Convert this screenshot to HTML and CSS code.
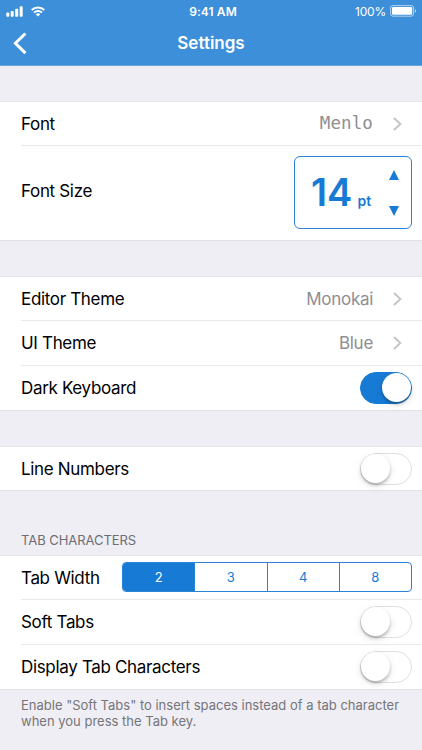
FILE: index.html
```html
<!DOCTYPE html>
<html lang="en">
<head>
  <meta charset="UTF-8">
  <meta name="viewport" content="width=device-width, initial-scale=1.0">
  <title>Settings</title>
  <link rel="stylesheet" href="styles.css">
</head>
<body>
  <header class="header">
    <div class="status-bar">
      <div class="status-left">
        <svg class="signal" width="17" height="11" viewBox="0 0 17 11" fill="#fff">
          <rect x="0.3" y="6.6" width="3" height="4.2" rx="0.8"/>
          <rect x="4.7" y="5" width="3" height="5.8" rx="0.8"/>
          <rect x="9.2" y="2.8" width="3" height="8" rx="0.8"/>
          <rect x="13.7" y="0.3" width="3" height="10.5" rx="0.8"/>
        </svg>
        <svg class="wifi" width="14" height="11" viewBox="0 0 14 11" fill="none" stroke="#fff" stroke-width="1.9">
          <path d="M0.7 4A9 9 0 0 1 13.3 4"/>
          <path d="M3 6.6A5.8 5.8 0 0 1 11 6.6"/>
          <path d="M7 10.6L4.8 8.4A3.1 3.1 0 0 1 9.2 8.4Z" fill="#fff" stroke="none"/>
        </svg>
      </div>
      <div class="status-time">9:41 AM</div>
      <div class="status-right">
        <span class="percent">100%</span>
        <svg width="27" height="12" viewBox="0 0 27 12">
          <rect x="0.6" y="0.6" width="23" height="10.6" rx="2.4" fill="none" stroke="#fff" stroke-opacity="0.6"/>
          <rect x="2" y="2" width="20.2" height="7.8" rx="1.2" fill="#fff"/>
          <path d="M24.9 4V7.8Q26.2 7.2 26.2 5.9T24.9 4Z" fill="#fff" fill-opacity="0.6"/>
        </svg>
      </div>
    </div>
    <nav class="nav-bar">
      <svg class="back" width="14" height="23" viewBox="0 0 14 23" fill="none" stroke="#fff" stroke-width="3">
        <path d="M12.4 1.5L2.4 11.3L12.4 21.1"/>
      </svg>
      <h1>Settings</h1>
    </nav>
  </header>

  <main>
    <section class="group">
      <div class="row first">
        <span class="label">Font</span>
        <span class="value mono">Menlo</span>
        <svg class="chevron" width="9" height="14" viewBox="0 0 9 14"><path d="M1 1L7.4 7L1 13"/></svg>
      </div>
      <div class="row tall">
        <span class="label">Font Size</span>
        <div class="stepper">
          <div class="size"><span class="number">14</span><span class="unit">pt</span></div>
          <div class="arrows">
            <svg width="10" height="10" viewBox="0 0 10 10"><path d="M5 0L10 10H0Z"/></svg>
            <svg width="10" height="10" viewBox="0 0 10 10"><path d="M5 10L10 0H0Z"/></svg>
          </div>
        </div>
      </div>
    </section>

    <section class="group">
      <div class="row first">
        <span class="label">Editor Theme</span>
        <span class="value">Monokai</span>
        <svg class="chevron" width="9" height="14" viewBox="0 0 9 14"><path d="M1 1L7.4 7L1 13"/></svg>
      </div>
      <div class="row">
        <span class="label">UI Theme</span>
        <span class="value">Blue</span>
        <svg class="chevron" width="9" height="14" viewBox="0 0 9 14"><path d="M1 1L7.4 7L1 13"/></svg>
      </div>
      <div class="row">
        <span class="label">Dark Keyboard</span>
        <div class="switch on"><div class="knob"></div></div>
      </div>
    </section>

    <section class="group">
      <div class="row single">
        <span class="label">Line Numbers</span>
        <div class="switch"><div class="knob"></div></div>
      </div>
    </section>

    <h2 class="group-title">TAB CHARACTERS</h2>
    <section class="group tabs">
      <div class="row first">
        <span class="label">Tab Width</span>
        <div class="segments">
          <div class="segment selected">2</div>
          <div class="segment">3</div>
          <div class="segment">4</div>
          <div class="segment">8</div>
        </div>
      </div>
      <div class="row">
        <span class="label">Soft Tabs</span>
        <div class="switch"><div class="knob"></div></div>
      </div>
      <div class="row">
        <span class="label">Display Tab Characters</span>
        <div class="switch"><div class="knob"></div></div>
      </div>
    </section>
    <p class="note">Enable "Soft Tabs" to insert spaces instead of a tab character<br>when you press the Tab key.</p>
  </main>
</body>
</html>
```
FILE: styles.css
```css
* {
  box-sizing: border-box;
}
body {
  margin: 0;
  height: 750px;
  overflow: hidden;
  background-color: #efeef4;
  font-family: Inter, "Liberation Sans", sans-serif;
  color: #000;
}
svg {
  display: block;
}
.header {
  height: 66px;
  background-color: #3d8fd9;
  border-bottom: 1px solid #6aa5dc;
  color: #fff;
}
.status-bar {
  display: grid;
  grid-template-columns: 1fr auto 1fr;
  align-items: center;
  height: 22px;
  padding: 0 5px 0 6px;
}
.status-left {
  display: flex;
  align-items: center;
  gap: 8px;
}
.status-time {
  font-size: 12px;
  font-weight: 600;
  letter-spacing: 0.1px;
  padding-left: 3px;
}
.status-right {
  display: flex;
  justify-content: flex-end;
  align-items: center;
  gap: 4px;
  font-size: 12px;
  letter-spacing: -0.2px;
}
.nav-bar {
  display: grid;
  grid-template-columns: 14px 1fr 14px;
  align-items: center;
  height: 43px;
  padding: 0 13px;
}
h1 {
  margin: 0;
  font-size: 17px;
  font-weight: 600;
  line-height: 20px;
  padding-bottom: 1px;
  text-align: center;
}
.group {
  margin-top: 35px;
  background-color: #fff;
  border-top: 1px solid #e6e5ea;
  border-bottom: 1px solid #e2e1e6;
}
.row {
  display: flex;
  align-items: center;
  height: 45px;
  margin-left: 21px;
  padding-right: 10px;
  border-bottom: 1px solid #e9e9eb;
}
.row.first {
  height: 44px;
}
.row:last-child {
  height: 44px;
  border-bottom: none;
}
.row.single {
  height: 43px;
}
.row.tall {
  height: 94px;
  padding-bottom: 1px;
}
.tall .label {
  padding-bottom: 3px;
}
.label {
  flex: 1;
  font-size: 17px;
  letter-spacing: -0.33px;
  white-space: nowrap;
}
.value {
  font-size: 17px;
  letter-spacing: -0.3px;
  color: #8e8e93;
}
.mono {
  padding-bottom: 2px;
  font-family: "DejaVu Sans Mono", monospace;
  font-size: 17.5px;
  letter-spacing: 0.1px;
}
.chevron {
  margin: 0 10px 0 20px;
  fill: none;
  stroke: #c2c2c7;
  stroke-width: 1.8;
}
.stepper {
  display: flex;
  justify-content: space-between;
  width: 118px;
  height: 73px;
  padding: 0 12px 0 16px;
  border: 1px solid #2b83d8;
  border-radius: 6px;
  color: #177bd6;
}
.size {
  display: flex;
  align-items: baseline;
  gap: 5px;
  padding-top: 12px;
}
.number {
  font-size: 38px;
  font-weight: 600;
}
.unit {
  font-size: 14px;
  font-weight: 600;
}
.arrows {
  display: flex;
  flex-direction: column;
  justify-content: space-between;
  padding: 13px 0 12px;
  fill: #177bd6;
}
.switch {
  width: 52px;
  height: 32px;
  margin-right: 0.5px;
  border: 1.5px solid #e0e0e2;
  border-radius: 16px;
  background-color: #fff;
}
.knob {
  width: 29px;
  height: 29px;
  border-radius: 50%;
  background-color: #fff;
  box-shadow: 0 2px 3px rgba(0, 0, 0, 0.25), 0 3px 8px rgba(0, 0, 0, 0.1);
}
.switch.on {
  border-color: #177bd6;
  background-color: #177bd6;
}
.switch.on .knob {
  margin-left: auto;
}
.group-title {
  margin: 41px 0 0 21px;
  font-size: 13px;
  font-weight: 400;
  line-height: 16px;
  letter-spacing: -0.05px;
  color: #6d6d72;
}
.tabs {
  margin-top: 7px;
}
.segments {
  display: flex;
  width: 290px;
  height: 30px;
  margin-bottom: 2px;
  border: 1px solid #2b83d8;
  border-radius: 4px;
  overflow: hidden;
}
.segment {
  flex: 1;
  font-size: 13px;
  line-height: 28px;
  text-align: center;
  color: #177bd6;
}
.segment + .segment {
  border-left: 1px solid #2b83d8;
}
.selected {
  background-color: #177bd6;
  color: #fff;
}
.note {
  margin: 7px 0 0 21px;
  font-size: 13px;
  line-height: 16px;
  color: #75757a;
  white-space: nowrap;
}
```
